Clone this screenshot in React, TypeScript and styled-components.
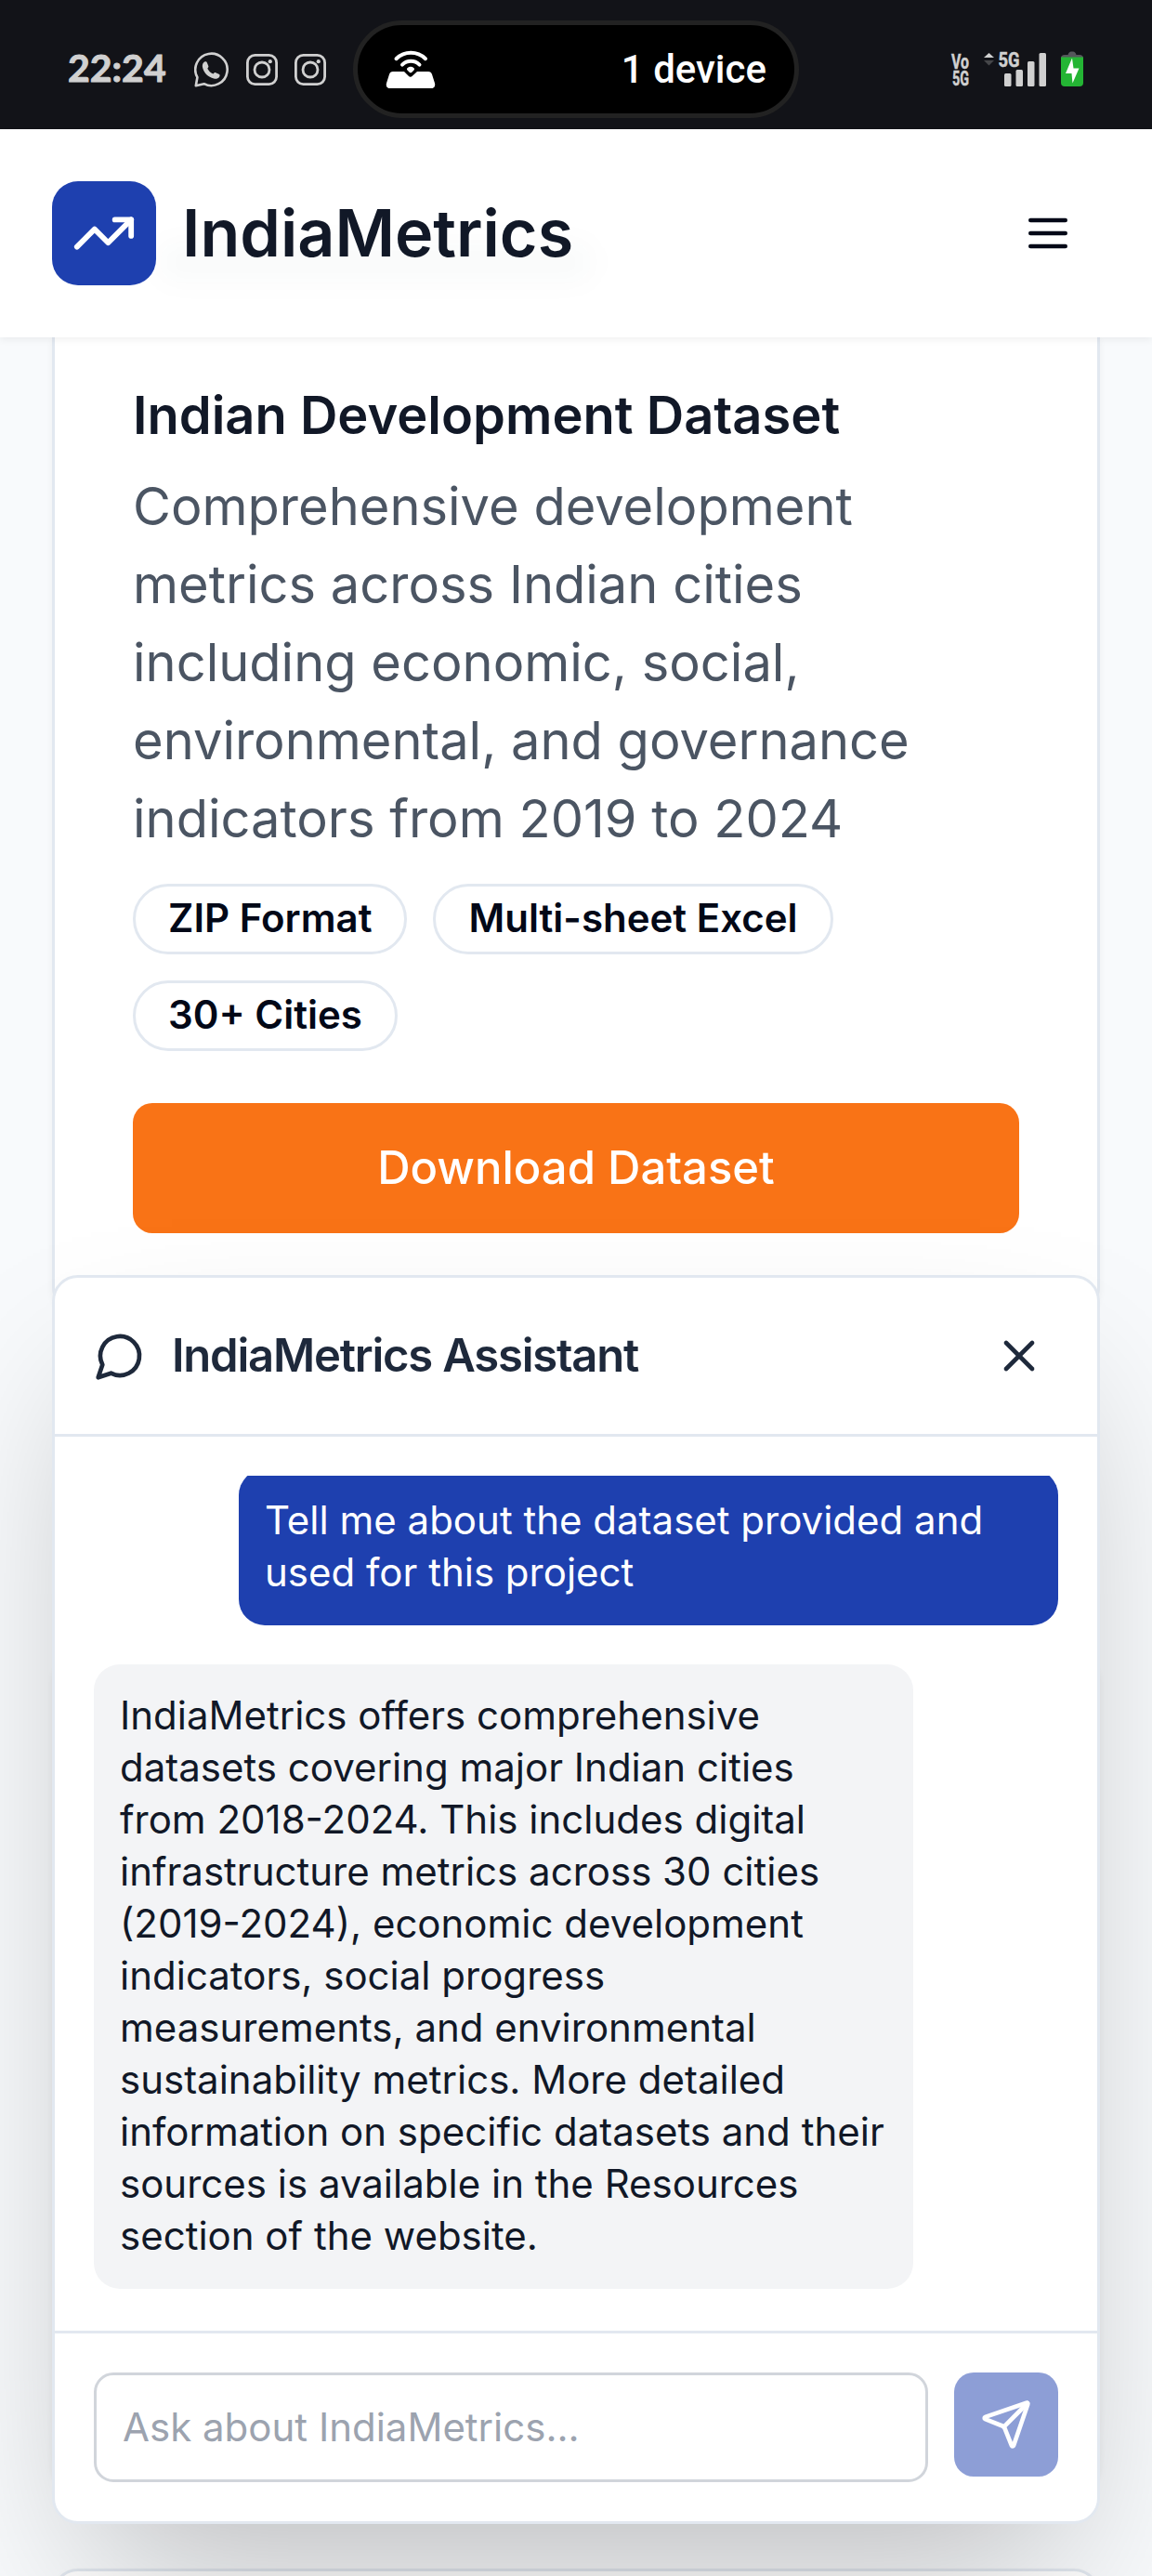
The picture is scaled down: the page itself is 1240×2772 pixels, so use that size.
import React from "react";
import styled, { createGlobalStyle } from "styled-components";
import { Send, TrendingUp, X } from "lucide-react";

const GlobalStyle = createGlobalStyle`
  *, *::before, *::after { box-sizing: border-box; }
  body {
    margin: 0;
    background: #f8fafc;
    font-family: Inter, "Liberation Sans", sans-serif;
    color: #020817;
  }
  h1, h2, p { margin: 0; }
  button, input { font: inherit; }
  svg { display: block; flex: none; }
`;

const Screen = styled.div`
  position: relative;
  width: 1240px;
  height: 2772px;
  overflow: hidden;
  display: flex;
  flex-direction: column;
  background: #f8fafc;
`;

/* ---------- Status bar ---------- */

const StatusBar = styled.div`
  flex: none;
  height: 139px;
  background: #121318;
  color: #d0d0d0;
  display: flex;
  align-items: center;
  padding: 10px 74px 0 73px;
`;

const Clock = styled.span`
  width: 136px;
  padding-bottom: 4px;
  font: 700 41px/50px Lato, sans-serif;
  -webkit-text-stroke: 1px currentColor;
`;

const Notifications = styled.div`
  display: flex;
  align-items: center;
  gap: 18.5px;
  width: 171px;
`;

const Island = styled.div`
  width: 480px;
  height: 105px;
  border: 5px solid #222;
  border-radius: 53px;
  background: #000;
  color: #fff;
  display: flex;
  align-items: center;
  justify-content: space-between;
  padding: 0 30px;
`;

const IslandText = styled.span`
  font: 500 42px/50px Roboto, sans-serif;
`;

const Signals = styled.div`
  margin-left: auto;
  display: flex;
  align-items: center;
  gap: 15px;

  svg { overflow: visible; }
`;

const NetworkLabel = styled.text`
  font: 700 21.5px Roboto, sans-serif;
  stroke: currentColor;
  stroke-width: 0.5px;
`;

/* ---------- Site header ---------- */

const Header = styled.header`
  position: relative;
  z-index: 1;
  flex: none;
  height: 224px;
  padding: 0 56px;
  display: flex;
  align-items: center;
  justify-content: space-between;
  background: #fff;
  box-shadow: 0 3.5px 7px rgba(0, 0, 0, 0.05);

  &::before {
    content: "";
    position: absolute;
    left: 170px;
    top: 122px;
    width: 468px;
    height: 42px;
    border-radius: 21px;
    background: rgba(17, 24, 39, 0.024);
    filter: blur(14px);
  }
`;

const Brand = styled.div`
  position: relative;
  display: flex;
  align-items: center;
  gap: 28px;
`;

const Logo = styled.div`
  width: 112px;
  height: 112px;
  border-radius: 28px;
  background: #1e40af;
  color: #fff;
  display: grid;
  place-items: center;
`;

const BrandName = styled.h1`
  font-size: 70px;
  font-weight: 600;
  line-height: 98px;
  color: #111827;
`;

const IconButton = styled.button<{ $size: number }>`
  width: ${(p) => p.$size}px;
  height: ${(p) => p.$size}px;
  padding: 0;
  border: 0;
  background: none;
  color: inherit;
  display: grid;
  place-items: center;
`;

/* ---------- Page content ---------- */

const Main = styled.main`
  flex: 1;
  padding: 0 56px;
  display: flex;
  flex-direction: column;
`;

const Card = styled.section`
  flex: none;
  background: #fff;
  border: 3px solid #e2e8f0;
  border-radius: 28px;
  box-shadow: 0 3.5px 7px rgba(0, 0, 0, 0.05);
`;

const DatasetCard = styled(Card)`
  border-top: 0;
  border-radius: 0 0 28px 28px;
  height: 1051px;
  padding: 42px 84px 84px;
  display: flex;
  flex-direction: column;
`;

const MiddleCard = styled(Card)`
  margin-top: 366px;
  height: 900px;
`;

const NextCard = styled(Card)`
  margin-top: 84px;
  height: 200px;
`;

const DatasetTitle = styled.h2`
  font-size: 56px;
  line-height: 84px;
  font-weight: 600;
  color: #111827;
`;

const Description = styled.p`
  margin-top: 14px;
  width: 954px;
  font-size: 56px;
  line-height: 84px;
  color: #4b5563;
`;

const Badges = styled.div`
  margin-top: 28px;
  display: flex;
  flex-wrap: wrap;
  gap: 28px;
`;

const Badge = styled.span`
  height: 76px;
  padding: 6px 35px 8px;
  border: 3px solid #e2e8f0;
  border-radius: 38px;
  font-size: 42px;
  line-height: 56px;
  font-weight: 600;
  white-space: nowrap;
`;

const DownloadButton = styled.button`
  margin-top: 56px;
  height: 140px;
  padding: 0 0 2px;
  flex: none;
  border: 0;
  border-radius: 21px;
  background: #f97316;
  color: #fff;
  font-size: 49px;
  font-weight: 500;
`;

/* ---------- Chat window, floats over the page ---------- */

const Chat = styled.aside`
  position: absolute;
  z-index: 2;
  left: 56px;
  right: 56px;
  bottom: 56px;
  height: 1344px;
  display: flex;
  flex-direction: column;
  background: #fff;
  border: 3px solid #e2e8f0;
  border-radius: 28px;
  box-shadow: 0 87.5px 175px -42px rgba(0, 0, 0, 0.25);
`;

const ChatHeader = styled.div`
  flex: none;
  height: 171px;
  padding: 0 42px;
  border-bottom: 3px solid #e2e8f0;
  display: flex;
  align-items: center;
  justify-content: space-between;
  color: #1e293b;
`;

const ChatTitle = styled.div`
  display: flex;
  align-items: center;
  gap: 28px;
`;

const ChatName = styled.span`
  padding-bottom: 2px;
  font-size: 49px;
  line-height: 49px;
  font-weight: 600;
  letter-spacing: -0.025em;
`;

const Messages = styled.div`
  flex: 1;
  min-height: 0;
  margin: 42px 42px 45px;
  overflow: hidden;
  display: flex;
  flex-direction: column;
  justify-content: flex-end;
  gap: 42px;
`;

const Bubble = styled.p<{ $mine?: boolean }>`
  flex: none;
  width: 882px;
  padding: 27px 28px 29px;
  border-radius: 28px;
  font-size: 42px;
  line-height: 56px;
  align-self: ${(p) => (p.$mine ? "flex-end" : "flex-start")};
  background: ${(p) => (p.$mine ? "#1e40af" : "#f3f4f6")};
  color: ${(p) => (p.$mine ? "#fff" : "#111827")};
`;

const Composer = styled.div`
  flex: none;
  padding: 42px;
  border-top: 3px solid #e2e8f0;
  display: flex;
  align-items: flex-start;
  gap: 28px;
`;

const Input = styled.input`
  flex: 1;
  min-width: 0;
  height: 118px;
  padding: 0 28px 2px;
  border: 3px solid #d1d5db;
  border-radius: 21px;
  background: #fff;
  font-size: 42px;
  outline: none;
  &::placeholder { color: #9ca3af; opacity: 1; }
`;

const SendButton = styled(IconButton)`
  border-radius: 21px;
  background: #1e40af;
  color: #fff;
  opacity: 0.5;
`;

/* ---------- Icons ---------- */

const WhatsAppIcon = () => (
  <svg width="37" height="38" viewBox="0 0 37 38" fill="none">
    <path
      d="M3.400 27.200A17.200 17.200 0 1 1 10.600 34.200L1.800 36.200Z"
      stroke="currentColor"
      strokeWidth="2.600"
      strokeLinejoin="round"
    />
    <path
      d="M10 11.500c1.300-1.600 3.300-1.600 4 .2l1.300 3.300c.4 1-.2 1.700-1 2.800 1.400 2.700 3.300 4.500 6.200 5.800 1-1.300 1.700-1.800 2.700-1.400l3.400 1.600c1.200.6 1.300 1.800.5 2.900-1.400 1.900-3.500 2.500-6 1.800C15 26.900 11 22.800 9.300 17.500c-.7-2.400-.6-4.400.7-6Z"
      fill="currentColor"
    />
  </svg>
);

const InstagramIcon = () => (
  <svg width="34" height="34" viewBox="0 0 34 34" fill="none" stroke="currentColor" strokeWidth="2.800">
    <rect x="1.400" y="1.400" width="31.200" height="31.200" rx="8" />
    <circle cx="17" cy="17" r="8" />
    <circle cx="25.800" cy="8.200" r="2.100" fill="currentColor" stroke="none" />
  </svg>
);

const HotspotIcon = () => (
  <svg width="54" height="42" viewBox="0 0 54 42">
    <path
      d="M8 23h12l4.500 4.600a3.200 3.200 0 0 0 4.600 0L34 23h12c2 0 3.400 1 4 3l3 9.500c.8 3-.6 5.500-3.500 5.500h-45C1.500 41 .2 38.500 1 35.500L4 26c.6-2 2-3 4-3Z"
      fill="#fff"
    />
    <path
      d="M11.500 9.200C20.500.700 34 .700 43 9.200M18 15.600c5.300-5 13.200-5 18.500 0"
      fill="none"
      stroke="#fff"
      strokeWidth="4"
      strokeLinecap="round"
    />
    <path d="M23.500 19.200c2-1.800 5-1.800 7 0 .8.900.6 1.500 0 2.200l-2.200 2.300c-.9.800-1.700.8-2.600 0l-2.200-2.300c-.6-.7-.8-1.300 0-2.200Z" fill="#fff" />
  </svg>
);

const VoIcon = () => (
  <svg width="20" height="56" viewBox="0 0 20 56" fill="currentColor">
    <NetworkLabel x="0" y="26.500" textLength="19" lengthAdjust="spacingAndGlyphs">Vo</NetworkLabel>
    <NetworkLabel x="1" y="44.500" textLength="18" lengthAdjust="spacingAndGlyphs">5G</NetworkLabel>
  </svg>
);

const SignalIcon = () => (
  <svg width="68" height="56" viewBox="0 -8 68 56" fill="currentColor">
    <path d="M5.500 2 11 7H0Z" />
    <path d="M0 10h11l-5.500 5.500Z" fill="#454649" />
    <NetworkLabel x="15.500" y="17" textLength="23" lengthAdjust="spacingAndGlyphs">5G</NetworkLabel>
    <rect x="22" y="24" width="7.500" height="14" rx="1.500" />
    <rect x="34.500" y="20" width="7.500" height="18" rx="1.500" />
    <rect x="47" y="11" width="7.500" height="27" rx="1.500" />
    <rect x="59.500" y="2" width="7.500" height="36" rx="1.500" />
  </svg>
);

const BatteryIcon = () => (
  <svg width="24" height="40" viewBox="0 0 24 40">
    <path d="M0 7.500Q0 4 4 4h3.500Q8.500.500 11 .500h2Q15.500.500 16.500 4H20q4 0 4 3.500Z" fill="#55565b" />
    <path d="M0 6.500h24V34q0 4-4 4H4q-4 0-4-4Z" fill="#24b534" />
    <path d="M12 7.500 5 24h6.500l1 10.500L19.500 18.500h-6Z" fill="#fff" />
  </svg>
);

const MenuIcon = () => (
  <svg width="56" height="56" viewBox="0 0 24 24" fill="none" stroke="currentColor" strokeWidth="2" strokeLinecap="round">
    <path d="M4 6h16M4 12h16M4 18h16" />
  </svg>
);

const ChatIcon = () => (
  <svg
    width="56"
    height="56"
    viewBox="0 0 24 24"
    fill="none"
    stroke="currentColor"
    strokeWidth="2"
    strokeLinecap="round"
    strokeLinejoin="round"
  >
    <path d="M7.900 20A9 9 0 1 0 4 16.100L2 22Z" />
  </svg>
);

const tags = ["ZIP Format", "Multi-sheet Excel", "30+ Cities"];

export default function App() {
  return (
    <Screen>
      <GlobalStyle />
      <StatusBar>
        <Clock>22:24</Clock>
        <Notifications>
          <WhatsAppIcon />
          <InstagramIcon />
          <InstagramIcon />
        </Notifications>
        <Island>
          <HotspotIcon />
          <IslandText>1 device</IslandText>
        </Island>
        <Signals>
          <VoIcon />
          <SignalIcon />
          <BatteryIcon />
        </Signals>
      </StatusBar>

      <Header>
        <Brand>
          <Logo>
            <TrendingUp size={70} />
          </Logo>
          <BrandName>IndiaMetrics</BrandName>
        </Brand>
        <IconButton $size={112} aria-label="Menu">
          <MenuIcon />
        </IconButton>
      </Header>

      <Main>
        <DatasetCard>
          <DatasetTitle>Indian Development Dataset</DatasetTitle>
          <Description>
            Comprehensive development metrics across Indian cities including economic, social,
            environmental, and governance indicators from 2019 to 2024
          </Description>
          <Badges>
            {tags.map((tag) => (
              <Badge key={tag}>{tag}</Badge>
            ))}
          </Badges>
          <DownloadButton>Download Dataset</DownloadButton>
        </DatasetCard>
        <MiddleCard />
        <NextCard />
      </Main>

      <Chat>
        <ChatHeader>
          <ChatTitle>
            <ChatIcon />
            <ChatName>IndiaMetrics Assistant</ChatName>
          </ChatTitle>
          <IconButton $size={84} aria-label="Close">
            <X size={56} />
          </IconButton>
        </ChatHeader>
        <Messages>
          <Bubble $mine>Tell me about the dataset provided and used for this project</Bubble>
          <Bubble>
            IndiaMetrics offers comprehensive datasets covering major Indian cities from 2018-2024.
            This includes digital infrastructure metrics across 30 cities (2019-2024), economic
            development indicators, social progress measurements, and environmental sustainability
            metrics. More detailed information on specific datasets and their sources is available in
            the Resources section of the website.
          </Bubble>
        </Messages>
        <Composer>
          <Input placeholder="Ask about IndiaMetrics..." />
          <SendButton $size={112} aria-label="Send">
            <Send size={56} />
          </SendButton>
        </Composer>
      </Chat>
    </Screen>
  );
}
